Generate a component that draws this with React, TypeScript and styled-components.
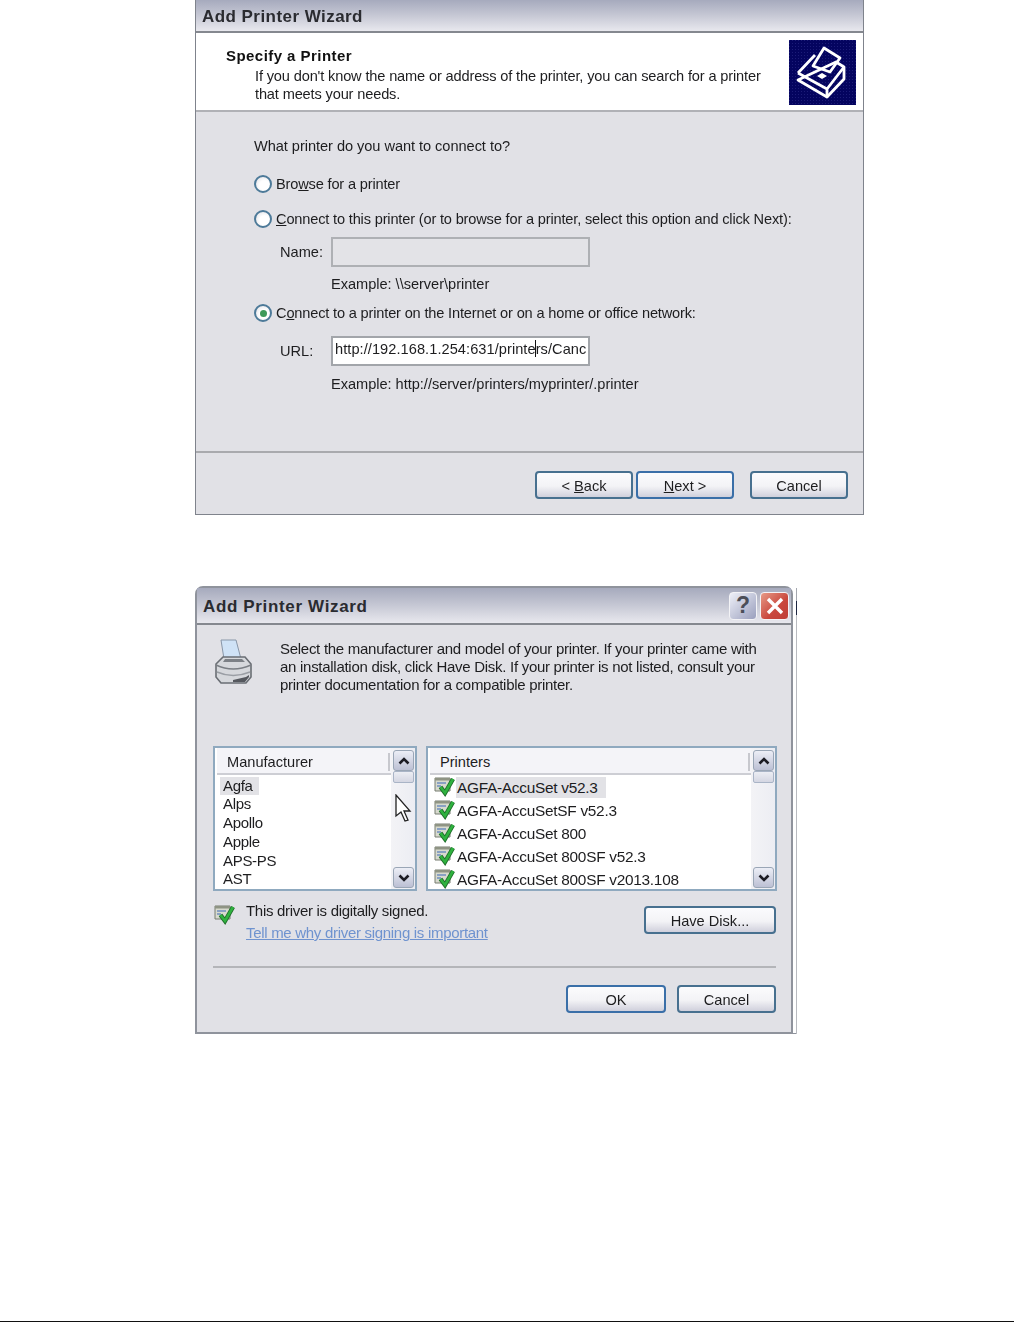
import React from 'react'
import styled, { createGlobalStyle } from 'styled-components'

const GlobalStyle = createGlobalStyle`
  html, body {
    margin: 0;
    padding: 0;
    background: #fff;
  }
`

const Page = styled.div`
  width: 1014px;
  height: 1322px;
  box-sizing: border-box;
  padding-left: 195px;
  display: flex;
  flex-direction: column;
  font-family: 'Liberation Sans', Arial, sans-serif;
  font-size: 15px;
  color: #1d1d1f;
`

const BottomRule = styled.div`
  margin: auto 0 0 -195px;
  height: 1px;
  background: #111;
`

const WizardDialog = styled.section`
  width: 669px;
  height: 515px;
  box-sizing: border-box;
  display: flex;
  flex-direction: column;
  background: #e1e1e6;
  border: 1px solid #7f838c;
  border-top: 0;
  filter: blur(0.4px);
`

const ModelDialog = styled.section`
  position: relative;
  width: 598px;
  height: 448px;
  margin-top: 71px;
  box-sizing: border-box;
  display: flex;
  flex-direction: column;
  background: #e1e1e6;
  border: 2px solid #8f939c;
  border-radius: 8px 8px 0 0;
  filter: blur(0.4px);

  /* leftover edge of the window behind the dialog */
  &::after {
    content: '';
    position: absolute;
    top: 0;
    bottom: -2px;
    right: -6px;
    width: 1px;
    background: linear-gradient(
      #a4a7ae 0,
      #a4a7ae 3%,
      #1c2540 3%,
      #1c2540 6%,
      #b9bbc0 6%,
      #b9bbc0 100%
    );
  }

  &::before {
    content: '';
    position: absolute;
    left: 100%;
    bottom: -2px;
    width: 6px;
    height: 1px;
    background: #8f939c;
  }
`

const TitleBar = styled.header<{ $height: number; $pad: number }>`
  height: ${(p) => p.$height}px;
  flex: none;
  display: flex;
  align-items: center;
  justify-content: space-between;
  box-sizing: border-box;
  padding: ${(p) => p.$pad}px 6px 0;
  background: linear-gradient(#a6aabd 0%, #c3c5d2 45%, #e8e8ee 100%);
  border-bottom: 2px solid #85888f;
`

const TitleText = styled.h1<{ $spacing: number }>`
  margin: 0;
  font-size: 17px;
  font-weight: 700;
  letter-spacing: ${(p) => p.$spacing}px;
  color: #2a2b30;
`

const WizardHeader = styled.div`
  height: 79px;
  flex: none;
  display: flex;
  justify-content: space-between;
  background: #fff;
  border-bottom: 2px solid #b0b1b6;
  box-sizing: border-box;
`

const HeaderText = styled.div`
  padding: 14px 0 0 30px;
  line-height: 18px;
`

const HeaderTitle = styled.div`
  font-weight: 700;
  letter-spacing: 0.45px;
  color: #111;
`

const HeaderDesc = styled.div`
  margin: 2px 0 0 29px;
  font-size: 14.6px;
  letter-spacing: -0.15px;
`

const WizardBadge = styled.svg`
  width: 67px;
  height: 65px;
  margin: 7px 7px 0 0;
`

const WizardBody = styled.div`
  flex: 1;
  padding: 24px 0 0 58px;
  display: flex;
  flex-direction: column;
  line-height: 20px;
  font-size: 14.6px;
`

const Question = styled.div`
  margin-bottom: 18px;
  letter-spacing: -0.05px;
`

const RadioRow = styled.label<{ $gap: number }>`
  display: flex;
  align-items: center;
  gap: 4px;
  margin-top: ${(p) => p.$gap}px;
  letter-spacing: -0.17px;
`

const Radio = styled.span<{ $checked?: boolean }>`
  width: 18px;
  height: 18px;
  box-sizing: border-box;
  border-radius: 50%;
  border: 2px solid #4d7a99;
  background: radial-gradient(circle at 60% 60%, #fff 40%, #dcdce2 100%);
  display: flex;
  align-items: center;
  justify-content: center;

  &::after {
    content: '';
    display: ${(p) => (p.$checked ? 'block' : 'none')};
    width: 7px;
    height: 7px;
    border-radius: 50%;
    background: #3f9a5a;
  }
`

const FieldRow = styled.div<{ $gap: number }>`
  display: grid;
  grid-template-columns: 51px 259px;
  align-items: center;
  padding-left: 26px;
  margin-top: ${(p) => p.$gap}px;
`

const FieldInput = styled.div<{ $disabled?: boolean }>`
  height: 30px;
  box-sizing: border-box;
  padding-left: 2px;
  line-height: 23px;
  white-space: nowrap;
  letter-spacing: 0.06px;
  background: ${(p) => (p.$disabled ? '#e3e3e7' : '#fff')};
  border: 2px solid ${(p) => (p.$disabled ? '#aeb0b4' : '#a2a5aa')};
`

const Caret = styled.span`
  display: inline-block;
  width: 1px;
  height: 17px;
  margin: 0 -0.5px;
  vertical-align: -3px;
  background: #111;
`

const Hint = styled.div<{ $gap: number }>`
  padding-left: 77px;
  margin-top: ${(p) => p.$gap}px;
  letter-spacing: -0.03px;
`

const Footer = styled.div`
  height: 63px;
  flex: none;
  box-sizing: border-box;
  border-top: 2px solid #a9aaae;
  padding: 18px 15px 0 0;
  display: flex;
  justify-content: flex-end;
  gap: 3px;
`

const PushButton = styled.button<{ $width: number; $default?: boolean; $after?: number; $top?: number }>`
  width: ${(p) => p.$width}px;
  height: 28px;
  margin-left: ${(p) => p.$after ?? 0}px;
  margin-top: ${(p) => p.$top ?? 0}px;
  padding: 2px 0 0;
  flex: none;
  font: inherit;
  font-size: 14.6px;
  color: #1d1d1f;
  border-radius: 4px;
  border: ${(p) => (p.$default ? '2px solid #3a6fa8' : '2px solid #47708f')};
  background: linear-gradient(#fbfbfd 0%, #f3f3f6 55%, #d0d0dc 100%);
`

const ModelIntro = styled.div`
  height: 121px;
  flex: none;
  display: flex;
  padding: 14px 0 0 16px;
  box-sizing: border-box;
  line-height: 18px;
  font-size: 15px;
  letter-spacing: -0.28px;
`

const IntroText = styled.div`
  margin-left: 26px;
  padding-top: 1px;
`

const IntroIcon = styled.svg`
  width: 41px;
  height: 47px;
  flex: none;
`

const Lists = styled.div`
  display: flex;
  gap: 9px;
  padding-left: 16px;
  height: 145px;
  flex: none;
`

const ListBox = styled.div<{ $width: number }>`
  width: ${(p) => p.$width}px;
  box-sizing: border-box;
  display: grid;
  grid-template-columns: 1fr 24px;
  background: #fff;
  border: 2px solid #8fa9bf;
`

const ListPane = styled.div`
  min-width: 0;
  overflow: hidden;
`

const ListHeader = styled.div`
  height: 27px;
  box-sizing: border-box;
  margin: 0 0 0 2px;
  padding: 3px 1px 0 10px;
  display: flex;
  align-items: center;
  justify-content: space-between;
  border-bottom: 2px solid #cdced4;
  background: #f4f4f8;
  font-size: 14.6px;

  &::after {
    content: '';
    width: 2px;
    height: 18px;
    background: #c7c8ce;
  }
`

const MakerRows = styled.div`
  padding: 0 0 0 5px;
  font-size: 15px;
  line-height: 18.8px;
  margin-top: 1.5px;
  letter-spacing: -0.3px;
`

const MakerRow = styled.div<{ $selected?: boolean }>`
  width: fit-content;
  padding: 0 6px 0 3px;
  background: ${(p) => (p.$selected ? '#e2e2e6' : 'transparent')};
`

const PrinterRows = styled.div`
  padding: 0 0 0 5px;
`

const PrinterRow = styled.div`
  height: 23px;
  display: flex;
  align-items: center;
  font-size: 15.4px;
  letter-spacing: -0.27px;
  white-space: nowrap;
`

const PrinterName = styled.span<{ $selected?: boolean }>`
  padding: 0 8px 0 1px;
  line-height: 21px;
  margin-top: 1px;
  background: ${(p) => (p.$selected ? '#e2e2e6' : 'transparent')};
`

const SignedIcon = styled.svg`
  width: 23px;
  height: 21px;
  flex: none;
`

const ScrollTrack = styled.div`
  display: flex;
  flex-direction: column;
  justify-content: space-between;
  padding: 2px 1px 1px 2px;
  background: linear-gradient(90deg, #f3f3f6, #ecedf3);
`

const ScrollGroup = styled.div`
  display: flex;
  flex-direction: column;
  gap: 0;
`

const ScrollButton = styled.div`
  width: 21px;
  height: 21px;
  box-sizing: border-box;
  display: flex;
  align-items: center;
  justify-content: center;
  border: 1px solid #9aa6b6;
  border-radius: 3px;
  background: linear-gradient(#eceef6, #bcc0d4);
`

const ScrollThumb = styled.div`
  width: 21px;
  height: 12px;
  box-sizing: border-box;
  border: 1px solid #a9b4c6;
  border-radius: 2px;
  background: linear-gradient(#eceef4, #d4d6e2);
`

const CaptionButtons = styled.div`
  display: flex;
  gap: 3px;
  margin-right: -4px;
  margin-top: -2px;
`

const CaptionButton = styled.div<{ $close?: boolean }>`
  width: ${(p) => (p.$close ? 29 : 28)}px;
  height: 28px;
  box-sizing: border-box;
  display: flex;
  align-items: center;
  justify-content: center;
  border: 1px solid #f3f3f6;
  border-radius: 4px;
  font-size: 23px;
  font-weight: 700;
  color: #4b4e58;
  background: ${(p) =>
    p.$close
      ? 'linear-gradient(135deg, #e79a86, #c9473d 60%, #bf3f38)'
      : 'linear-gradient(135deg, #eef0f8, #9a9fbd)'};
`

const SignedRow = styled.div`
  display: flex;
  padding: 13px 15px 0 16px;
  height: 75px;
  box-sizing: border-box;
  flex: none;
  line-height: 22px;
`

const SignedText = styled.div`
  margin: -4px 0 0 10px;
  flex: 1;
  letter-spacing: -0.3px;
`

const DriverLink = styled.a`
  color: #6f93cf;
  text-decoration: underline;
`

const Divider = styled.div`
  margin: 0 15px 0 16px;
  height: 2px;
  background: #b4b5b9;
  flex: none;
`

const ModelFooter = styled.div`
  display: flex;
  justify-content: flex-end;
  gap: 11px;
  padding: 17px 15px 0 0;
`

const CursorMark = styled.svg`
  position: absolute;
  left: 198px;
  top: 206px;
  width: 18px;
  height: 29px;
`

const ArrowGlyph = ({ down }: { down?: boolean }) => (
  <svg width="12" height="8" viewBox="0 0 12 8">
    <path
      d={down ? 'M1.5 1.5 6 6l4.5-4.5' : 'M1.5 6.5 6 2l4.5 4.5'}
      fill="none"
      stroke="#1c1c24"
      strokeWidth="2.6"
    />
  </svg>
)

const Scrollbar = () => (
  <ScrollTrack>
    <ScrollGroup>
      <ScrollButton>
        <ArrowGlyph />
      </ScrollButton>
      <ScrollThumb />
    </ScrollGroup>
    <ScrollButton>
      <ArrowGlyph down />
    </ScrollButton>
  </ScrollTrack>
)

const DriverIcon = () => (
  <SignedIcon viewBox="0 0 23 21">
    <path d="M2 2h15v13H2z" fill="#d8dace" stroke="#777c70" />
    <path d="M2 2h15v2.5H2z" fill="#8f9484" />
    <path d="M4 7h9M4 10h4" stroke="#6f8fc0" strokeWidth="1.3" />
    <path d="M7.5 11l4.5 6L20 3" fill="none" stroke="#1f6d2a" strokeWidth="4.4" />
    <path d="M7.5 11l4.5 6L20 3" fill="none" stroke="#2fb23f" strokeWidth="2.6" />
  </SignedIcon>
)

const makers = ['Agfa', 'Alps', 'Apollo', 'Apple', 'APS-PS', 'AST']
const printers = [
  'AGFA-AccuSet v52.3',
  'AGFA-AccuSetSF v52.3',
  'AGFA-AccuSet 800',
  'AGFA-AccuSet 800SF v52.3',
  'AGFA-AccuSet 800SF v2013.108',
]

const App: React.FC = () => {
  return (
    <Page>
      <GlobalStyle />
      <WizardDialog>
        <TitleBar $height={33} $pad={2}>
          <TitleText $spacing={0.45}>Add Printer Wizard</TitleText>
        </TitleBar>
        <WizardHeader>
          <HeaderText>
            <HeaderTitle>Specify a Printer</HeaderTitle>
            <HeaderDesc>
              If you don't know the name or address of the printer, you can search for a printer
              <br />
              that meets your needs.
            </HeaderDesc>
          </HeaderText>
          <WizardBadge viewBox="0 0 67 65">
            <defs>
              <pattern id="badgeDots" width="3" height="3" patternUnits="userSpaceOnUse">
                <rect width="3" height="3" fill="#04045f" />
                <rect width="1" height="1" fill="#1c1c78" />
              </pattern>
            </defs>
            <rect width="67" height="65" fill="url(#badgeDots)" />
            <g fill="none" stroke="#fff" strokeWidth="2.8" strokeLinejoin="round">
              <path d="M9 33 L26 15 M47 22 L55 27 V39 L38 57 L9 40 Z" />
              <path d="M9 33 L38 49 L55 27 M38 49 V57" />
              <path d="M24 26 L35 8 L51 18 L41 32 Z" />
            </g>
            <path d="M28 36l5-3 5 3-5 3z" fill="#fff" />
          </WizardBadge>
        </WizardHeader>
        <WizardBody>
          <Question>What printer do you want to connect to?</Question>
          <RadioRow $gap={0}>
            <Radio />
            <span>
              Bro<u>w</u>se for a printer
            </span>
          </RadioRow>
          <RadioRow $gap={15}>
            <Radio />
            <span>
              <u>C</u>onnect to this printer (or to browse for a printer, select this option and click Next):
            </span>
          </RadioRow>
          <FieldRow $gap={8}>
            <span>Name:</span>
            <FieldInput $disabled />
          </FieldRow>
          <Hint $gap={7}>Example: \\server\printer</Hint>
          <RadioRow $gap={9}>
            <Radio $checked />
            <span>
              C<u>o</u>nnect to a printer on the Internet or on a home or office network:
            </span>
          </RadioRow>
          <FieldRow $gap={13}>
            <span>URL:</span>
            <FieldInput>
              http://192.168.1.254:631/printe
              <Caret />
              rs/Canc
            </FieldInput>
          </FieldRow>
          <Hint $gap={8}>Example: http://server/printers/myprinter/.printer</Hint>
        </WizardBody>
        <Footer>
          <PushButton $width={98}>
            &lt; <u>B</u>ack
          </PushButton>
          <PushButton $width={98} $default>
            <u>N</u>ext &gt;
          </PushButton>
          <PushButton $width={98} $after={13}>
            Cancel
          </PushButton>
        </Footer>
      </WizardDialog>

      <ModelDialog>
        <TitleBar $height={37} $pad={2}>
          <TitleText $spacing={0.65}>Add Printer Wizard</TitleText>
          <CaptionButtons>
            <CaptionButton>?</CaptionButton>
            <CaptionButton $close>
              <svg width="18" height="18" viewBox="0 0 18 18">
                <path d="M2 2l14 14M16 2L2 16" stroke="#fff" strokeWidth="3.4" />
              </svg>
            </CaptionButton>
          </CaptionButtons>
        </TitleBar>
        <ModelIntro>
          <IntroIcon viewBox="0 0 41 47">
            <path d="M8 1h15l5 19H11z" fill="#cfe2f6" stroke="#8896a8" />
            <path d="M3 25l7-7h22l6 7v13l-5 6H8l-5-6z" fill="#d6d8dc" stroke="#6a6e74" strokeWidth="1.6" />
            <path d="M3 26q17 8 35 0" fill="none" stroke="#7a7e84" strokeWidth="1.4" />
            <path d="M4 33q16 7 33 0" fill="none" stroke="#9a9ea4" strokeWidth="1.4" />
            <path d="M12 20h17l3 3H10z" fill="#7c8086" />
            <path d="M20 41l13-3 3-2v2l-4 5H20z" fill="#55585e" />
          </IntroIcon>
          <IntroText>
            Select the manufacturer and model of your printer. If your printer came with
            <br />
            an installation disk, click Have Disk. If your printer is not listed, consult your
            <br />
            printer documentation for a compatible printer.
          </IntroText>
        </ModelIntro>
        <Lists>
          <ListBox $width={204}>
            <ListPane>
              <ListHeader>Manufacturer</ListHeader>
              <MakerRows>
                {makers.map((m, i) => (
                  <MakerRow key={m} $selected={i === 0}>
                    {m}
                  </MakerRow>
                ))}
              </MakerRows>
            </ListPane>
            <Scrollbar />
          </ListBox>
          <ListBox $width={351}>
            <ListPane>
              <ListHeader>Printers</ListHeader>
              <PrinterRows>
                {printers.map((p, i) => (
                  <PrinterRow key={p}>
                    <DriverIcon />
                    <PrinterName $selected={i === 0}>{p}</PrinterName>
                  </PrinterRow>
                ))}
              </PrinterRows>
            </ListPane>
            <Scrollbar />
          </ListBox>
        </Lists>
        <SignedRow>
          <DriverIcon />
          <SignedText>
            This driver is digitally signed.
            <br />
            <DriverLink>Tell me why driver signing is important</DriverLink>
          </SignedText>
          <PushButton $width={132} $top={2}>
            Have Disk...
          </PushButton>
        </SignedRow>
        <Divider />
        <ModelFooter>
          <PushButton $width={100} $default>
            OK
          </PushButton>
          <PushButton $width={99}>Cancel</PushButton>
        </ModelFooter>
        <CursorMark viewBox="0 0 18 29">
          <path
            d="M1 1v21l5-4 4 9 3-1-4-9h6z"
            fill="#fff"
            stroke="#222"
            strokeWidth="1.3"
          />
        </CursorMark>
      </ModelDialog>
      <BottomRule />
    </Page>
  )
}

export default App
